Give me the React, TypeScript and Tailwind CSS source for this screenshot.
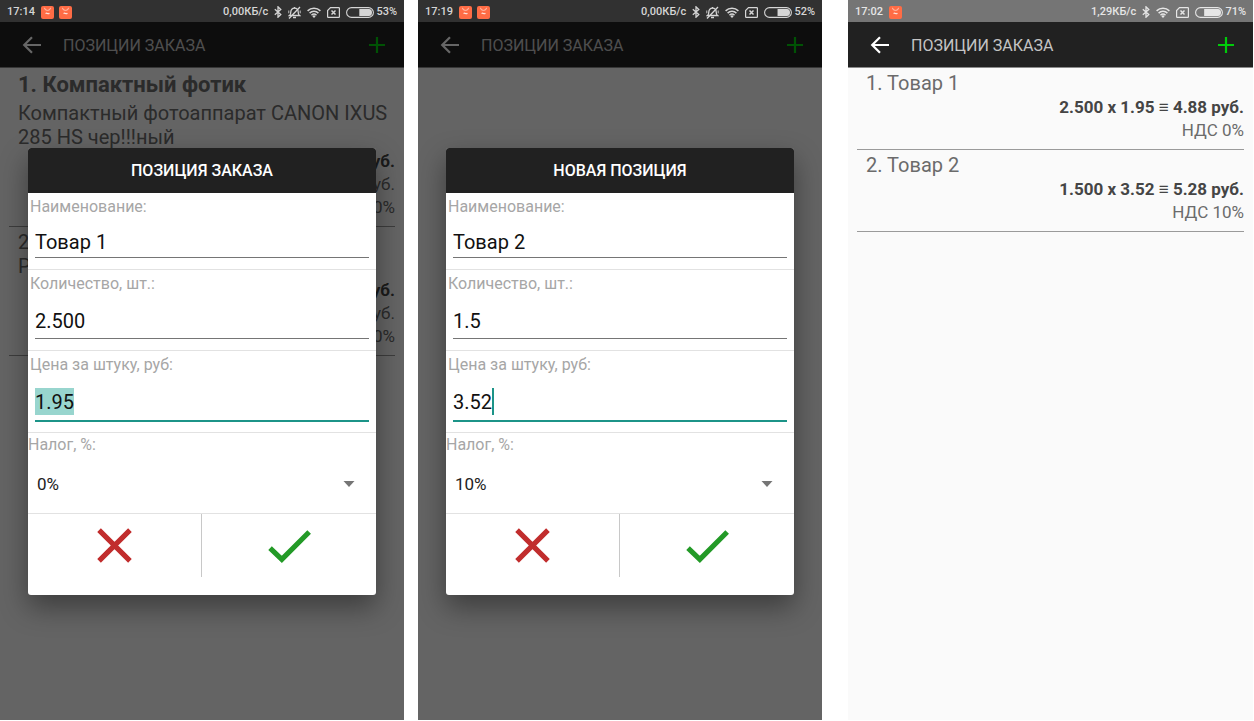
import { ReactNode, useId } from "react";

type Item = {
  title: string;
  description?: string;
  lines: string[];
};

const draftItems: Item[] = [
  {
    title: "1. Компактный фотик",
    description: "Компактный фотоаппарат CANON IXUS 285 HS чер!!!ный",
    lines: ["руб.", "руб.", "0%"],
  },
  { title: "2.\nР", lines: ["руб.", "руб.", "0%"] },
];

const savedItems: Item[] = [
  { title: "1. Товар 1", lines: ["2.500 x 1.95 ≡ 4.88 руб.", "НДС 0%"] },
  { title: "2. Товар 2", lines: ["1.500 x 3.52 ≡ 5.28 руб.", "НДС 10%"] },
];

function NotificationIcon() {
  return (
    <svg className="h-[13px] w-[13px]" viewBox="0 0 13 13" fill="none">
      <rect width="13" height="13" rx="2" fill="#ff6c45" />
      <path d="M3.500 1.800a3 2.600 0 0 0 6 0" stroke="#ffd0c2" strokeWidth="0.9" />
      <path d="M4.600 7.700c.7-.9 1.300-.6 1.900-.2s1.200.4 1.900-.4" stroke="#ffe6de" strokeWidth="1.100" />
    </svg>
  );
}

function BluetoothIcon() {
  return (
    <svg className="h-3 w-2" viewBox="0 0 8 12" fill="none" stroke="currentColor" strokeWidth="1.300">
      <path d="M.8 3.200 6.800 8.600 4 11.200V.8l2.800 2.600L.8 8.800" />
    </svg>
  );
}

function MutedIcon() {
  return (
    <svg className="h-[13px] w-[13px]" viewBox="0 0 13 13" fill="none" stroke="currentColor" strokeWidth="1.300">
      <path d="M1.500 9.500c1.300-1 1.300-2 1.300-3.600 0-2.300 1.500-3.700 3.700-3.700s3.700 1.400 3.700 3.700c0 1.600 0 2.600 1.300 3.600z" />
      <path d="M5 11.500h3M6.500 2.200V1M12 1 1 12.500" />
      <path d="M.8 4.500v2.800M12.200 4.500v2.800" strokeWidth="0.9" />
    </svg>
  );
}

function WifiIcon() {
  return (
    <svg className="h-[11px] w-[14px]" viewBox="0 0 14 11" fill="none" stroke="currentColor" strokeWidth="1.500">
      <path d="M.6 3.900a9.200 9.200 0 0 1 12.800 0M2.600 6.100a6.300 6.300 0 0 1 8.800 0M4.500 8.200a3.600 3.600 0 0 1 5 0" />
      <path d="M5.400 9.200a2.200 2.200 0 0 1 3.200 0L7 10.900z" fill="currentColor" stroke="none" />
    </svg>
  );
}

function SimIcon() {
  return (
    <svg className="h-[11px] w-[13px]" viewBox="0 0 13 11" fill="none" stroke="currentColor">
      <path d="M3.500.6h8.200c.4 0 .7.3.7.7v8.400c0 .4-.3.7-.7.7H1.300c-.4 0-.7-.3-.7-.7V3.500z" strokeWidth="1.200" />
      <path d="m4.500 3.500 4 4m0-4-4 4" strokeWidth="1.500" />
    </svg>
  );
}

function BatteryIcon({ level }: { level: number }) {
  const width = (23 * level) / 100;
  return (
    <svg className="h-[11px] w-7" viewBox="0 0 28 11" fill="none">
      <rect x=".6" y=".6" width="26.800" height="9.800" rx="4.900" stroke="currentColor" strokeWidth="1.100" />
      <path d={`M${25.5 - width} 2H23a3 3.500 0 0 1 0 7H${25.5 - width}z`} fill="currentColor" />
    </svg>
  );
}

function StatusBar({ time, speed, battery, notifications, muted, dimmed }: {
  time: string;
  speed: string;
  battery: number;
  notifications: number;
  muted?: boolean;
  dimmed?: boolean;
}) {
  return (
    <div
      className={`flex h-[22px] shrink-0 items-center px-[7px] pt-0.5 text-[11px] font-medium ${
        dimmed ? "bg-[#313131] text-[#d6d6d6]" : "bg-[#757575] text-[#e6e6e6]"
      }`}
    >
      <span>{time}</span>
      <div className="ml-1.5 flex gap-[5px]">
        {Array.from({ length: notifications }, (_, i) => (
          <NotificationIcon key={i} />
        ))}
      </div>
      <div className="ml-auto flex items-center gap-1.5">
        <span>{speed}</span>
        <BluetoothIcon />
        {muted && <MutedIcon />}
        <WifiIcon />
        <SimIcon />
        <div className="flex items-center gap-0.5">
          <BatteryIcon level={battery} />
          <span>{battery}%</span>
        </div>
      </div>
    </div>
  );
}

function AppBar() {
  return (
    <header className="flex h-[46px] shrink-0 items-center border-b border-[#8a8a8a] bg-[#212121] pr-[18px] pl-[22px]">
      <button type="button" aria-label="Назад" className="text-white">
        <svg className="h-5 w-5" viewBox="0 0 20 20" fill="none" stroke="currentColor" strokeWidth="2.200">
          <path d="M19 10H2.500M10 2.200 2.200 10l7.800 7.800" />
        </svg>
      </button>
      <h1 className="ml-[21px] pt-0.5 text-base text-[#c4c4c4]">ПОЗИЦИИ ЗАКАЗА</h1>
      <button type="button" aria-label="Добавить" className="ml-auto text-[#00cc0a]">
        <svg className="h-[18px] w-[18px]" viewBox="0 0 18 18" stroke="currentColor" strokeWidth="2.200">
          <path d="M9 1v16M1 9h16" />
        </svg>
      </button>
    </header>
  );
}

function ItemList({ items }: { items: Item[] }) {
  return (
    <ul className="px-[9px]">
      {items.map((item) => (
        <li key={item.title} className="border-b border-[#9a9a9a] pt-[3px] pb-[7px] text-[#6b6b6b]">
          <h2
            className={`pl-[9px] whitespace-pre-line ${
              item.description ? "mb-0.5 text-[22px] leading-7 font-bold" : "text-[20px] leading-6"
            }`}
          >
            {item.title}
          </h2>
          {item.description && <p className="pl-[9px] text-[20px] leading-6">{item.description}</p>}
          <div className="pt-px text-right text-[17px] leading-[23px]">
            {item.lines.map((line, i) => (
              <p key={i} className={i === 0 ? "font-bold text-[#454545]" : ""}>
                {line}
              </p>
            ))}
          </div>
        </li>
      ))}
    </ul>
  );
}

function Field({ label, value, state = "idle", compact }: {
  label: string;
  value: string;
  state?: "idle" | "selected" | "typing";
  compact?: boolean;
}) {
  const id = useId();
  return (
    <div className={`border-b border-[#e2e2e2] ${state === "idle" ? "pb-[11px]" : "pb-[10px]"}`}>
      <label htmlFor={id} className="block px-0.5 pt-0.5 text-base leading-6 text-[#a6a6a6]">
        {label}
      </label>
      <div
        className={`relative mx-[7px] ${compact ? "pt-2" : "pt-3"} ${
          state === "idle" ? "border-b border-[#757575]" : "border-b-2 border-[#1c9488] pb-px"
        }`}
      >
        {state === "selected" && <span className="absolute bottom-[5px] left-0 h-[27px] w-[39px] bg-[#98d5ce]" />}
        <input
          id={id}
          type="text"
          defaultValue={value}
          className={`relative block h-[30px] w-full bg-transparent p-0 text-[20px] text-[#111] outline-none ${
            compact ? "" : "pb-1"
          }`}
        />
        {state === "typing" && <span className="absolute bottom-[5px] left-[39px] h-[27px] w-0.5 bg-[#1c9488]" />}
      </div>
    </div>
  );
}

function TaxSelect({ value }: { value: string }) {
  const id = useId();
  return (
    <div className="border-b border-[#e2e2e2] pb-1.5">
      <label htmlFor={id} className="block text-base leading-6 text-[#a6a6a6]">
        Налог, %:
      </label>
      <div className="relative">
        <select
          id={id}
          defaultValue={value}
          className="block h-[50px] w-full appearance-none bg-transparent pt-1.5 pr-10 pb-0 pl-[9px] text-[17px] text-[#222] outline-none"
        >
          <option>0%</option>
          <option>10%</option>
        </select>
        <svg className="pointer-events-none absolute top-6 right-[21px] h-1.5 w-3" viewBox="0 0 12 6">
          <path d="M.5 0h11L6 6z" fill="#757575" />
        </svg>
      </div>
    </div>
  );
}

function ItemDialog({ title, children, tax }: { title: string; children: ReactNode; tax: string }) {
  return (
    <div className="absolute inset-0 flex items-center bg-black/60 px-7">
      <form className="w-full overflow-hidden rounded-[3px] bg-white pb-[18px] shadow-[0_12px_28px_rgba(0,0,0,0.4)]">
        <h2 className="h-[45px] bg-[#212121] text-center text-base leading-[45px] font-medium text-white">{title}</h2>
        {children}
        <TaxSelect value={tax} />
        <div className="grid h-[63px] grid-cols-2">
          <button type="button" aria-label="Отмена" className="flex items-center justify-center border-r border-[#c8c8c8]">
            <svg className="h-[35px] w-[35px]" viewBox="0 0 34 34" stroke="#c12d2d" strokeWidth="5">
              <path d="m2 2 30 30M32 2 2 32" />
            </svg>
          </button>
          <button type="button" aria-label="Сохранить" className="flex items-center justify-center pt-0.5">
            <svg className="h-[33px] w-[43px]" viewBox="0 0 42 32" fill="none" stroke="#239a27" strokeWidth="5">
              <path d="m2 17.500 11.500 11L40.200 1.800" />
            </svg>
          </button>
        </div>
      </form>
    </div>
  );
}

function Phone({ status, children }: { status: ReactNode; children: ReactNode }) {
  return (
    <section className="flex min-w-0 flex-col bg-[#fafafa]">
      {status}
      <div className="relative flex-1 overflow-hidden">
        <AppBar />
        {children}
      </div>
    </section>
  );
}

export default function App() {
  return (
    <main className="grid min-h-screen grid-cols-[404fr_14fr_404fr_26fr_405fr] bg-white pr-px pb-px font-[Roboto,sans-serif]">
      <Phone status={<StatusBar time="17:14" speed="0,00КБ/с" battery={53} notifications={2} muted dimmed />}>
        <ItemList items={draftItems} />
        <ItemDialog title="ПОЗИЦИЯ ЗАКАЗА" tax="0%">
          <Field label="Наименование:" value="Товар 1" compact />
          <Field label="Количество, шт.:" value="2.500" />
          <Field label="Цена за штуку, руб:" value="1.95" state="selected" />
        </ItemDialog>
      </Phone>
      <div />
      <Phone status={<StatusBar time="17:19" speed="0,00КБ/с" battery={52} notifications={2} muted dimmed />}>
        <ItemDialog title="НОВАЯ ПОЗИЦИЯ" tax="10%">
          <Field label="Наименование:" value="Товар 2" compact />
          <Field label="Количество, шт.:" value="1.5" />
          <Field label="Цена за штуку, руб:" value="3.52" state="typing" />
        </ItemDialog>
      </Phone>
      <div />
      <Phone status={<StatusBar time="17:02" speed="1,29КБ/с" battery={71} notifications={1} />}>
        <ItemList items={savedItems} />
      </Phone>
    </main>
  );
}
